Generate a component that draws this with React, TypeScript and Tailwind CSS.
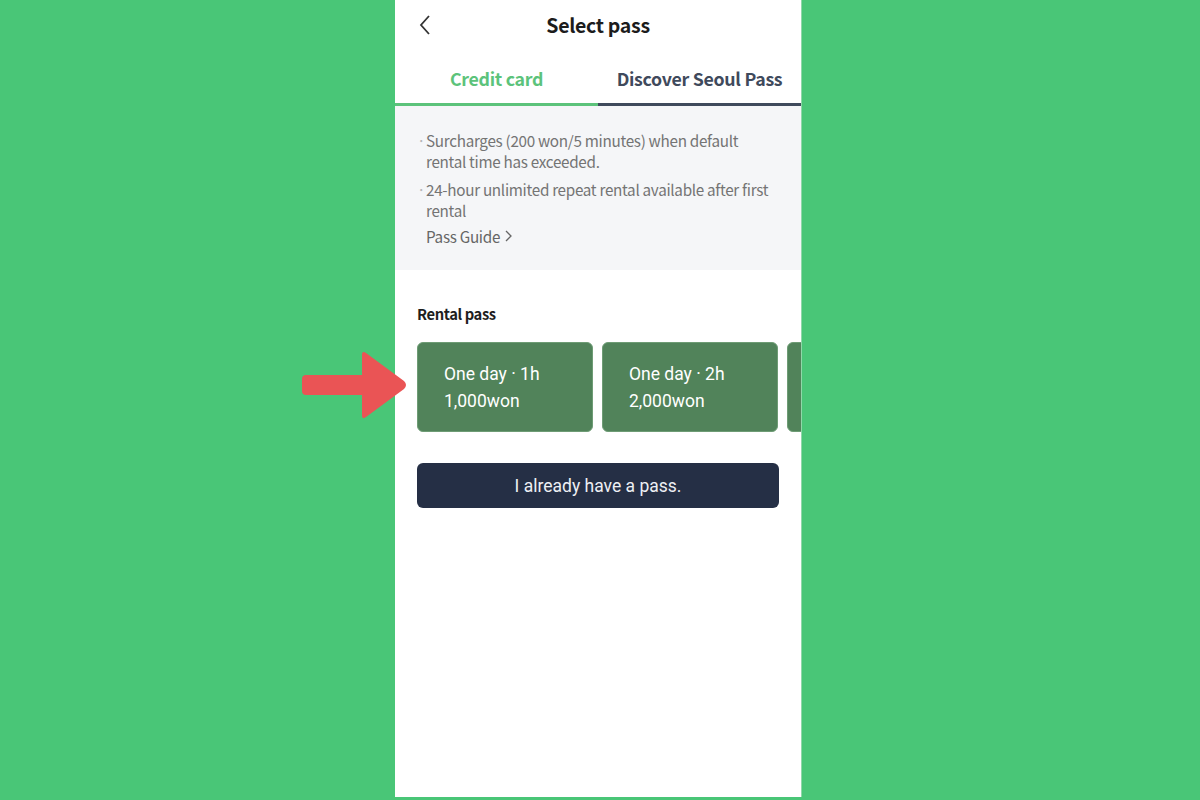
import React from 'react';

const passes = [
  { name: 'One day · 1h', price: '1,000won' },
  { name: 'One day · 2h', price: '2,000won' },
  { name: 'One day · 3h', price: '3,000won' },
];

function RedArrow() {
  return (
    <svg className="absolute left-[300px] top-[349px]" width="108" height="72" viewBox="0 0 108 72">
      <path
        d="M6 26 H62 V6 Q62 1 66 4 L104 32 Q108 36 104 40 L66 68 Q62 71 62 66 V46 H6 Q2 46 2 42 V30 Q2 26 6 26 Z"
        fill="#ea5455"
      />
    </svg>
  );
}

export default function App() {
  return (
    <div
      className="relative w-[1200px] h-[800px] bg-[#49c677] overflow-hidden"
      style={{ fontFamily: '"Noto Sans CJK KR", "Noto Sans", sans-serif' }}
    >
      <div className="ml-[395px] w-[407px] h-[797px] bg-white flex flex-col border-r border-[#8fd8a8]">
        {/* header */}
        <div className="relative h-[50px] flex items-center justify-center">
          <svg className="absolute left-[23px]" width="14" height="22" viewBox="0 0 14 22">
            <path d="M11 2 L3 11 L11 20" fill="none" stroke="#333" strokeWidth="1.8" />
          </svg>
          <span className="text-[19.5px] font-bold text-[#1c1c1c] tracking-[-0.3px]">Select pass</span>
        </div>

        {/* tabs */}
        <div className="flex h-[56px]">
          <div className="flex-1 flex items-center justify-center pt-[4px] border-b-[3px] border-[#5cc37b]">
            <span className="text-[17.75px] font-bold text-[#5cc37b] tracking-[-0.3px]">Credit card</span>
          </div>
          <div className="flex-1 flex items-center justify-center pt-[4px] border-b-[3px] border-[#3f4a5c]">
            <span className="text-[17.75px] font-bold text-[#3f4a5c] tracking-[-0.3px]">Discover Seoul Pass</span>
          </div>
        </div>

        {/* notice */}
        <div className="bg-[#f5f6f8] h-[164px] pl-[22px] pr-[16px] pt-[24px] text-[15.25px] text-[#747474] leading-[20.5px] tracking-[-0.3px]">
          <div className="flex">
            <span className="w-[9px] shrink-0 text-[#b5b5b5]">·</span>
            <span className="whitespace-nowrap">Surcharges (200 won/5 minutes) when default<br />rental time has exceeded.</span>
          </div>
          <div className="flex mt-[8px]">
            <span className="w-[9px] shrink-0 text-[#b5b5b5]">·</span>
            <span className="whitespace-nowrap">24-hour unlimited repeat rental available after first<br />rental</span>
          </div>
          <div className="flex items-center gap-[5px] mt-[6px] ml-[9px] text-[#666]">
            <span>Pass Guide</span>
            <svg width="7" height="12" viewBox="0 0 7 12">
              <path d="M1 1 L6 6 L1 11" fill="none" stroke="#666" strokeWidth="1.3" />
            </svg>
          </div>
        </div>

        {/* rental pass */}
        <div className="pl-[22px] pt-[34px]">
          <div className="text-[14.75px] font-bold text-[#1e1e1e] leading-[20px] tracking-[-0.4px]">Rental pass</div>
          <div className="flex gap-[9px] mt-[18px] overflow-hidden">
            {passes.map((p) => (
              <div
                key={p.name}
                className="shrink-0 w-[176px] h-[90px] rounded-[6px] bg-[#51835a] border border-[#6e9c75] pl-[26px] pt-[18px] text-white text-[17.5px] leading-[27px]"
                style={{ fontFamily: 'Roboto, sans-serif' }}
              >
                <div>{p.name}</div>
                <div>{p.price}</div>
              </div>
            ))}
          </div>
        </div>

        <div className="px-[22px] pt-[31px]">
          <button
            className="w-[362px] h-[45px] pt-[2px] rounded-[6px] bg-[#252f45] text-[#eef0f4] text-[17.5px]"
            style={{ fontFamily: 'Roboto, sans-serif' }}
          >
            I already have a pass.
          </button>
        </div>
      </div>
      <RedArrow />
    </div>
  );
}
